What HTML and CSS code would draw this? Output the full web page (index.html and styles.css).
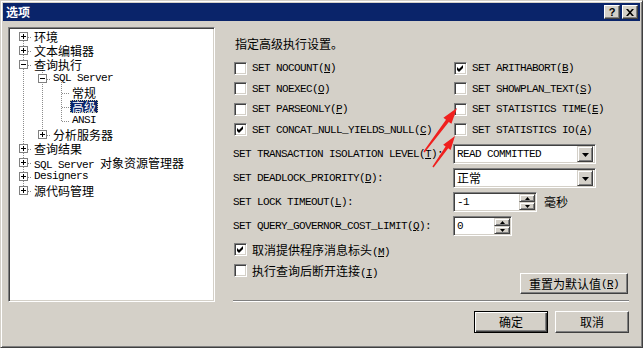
FILE: index.html
```html
<!DOCTYPE html>
<html>
<head>
<meta charset="utf-8">
<title>选项</title>
<link rel="stylesheet" href="styles.css">
</head>
<body>
<div class="window">
  <div class="titlebar">
    <span class="title">选项</span>
    <div class="capbtns">
      <span class="capbtn help">?</span>
      <span class="capbtn"><svg width="8" height="7" viewBox="0 0 8 7"><path d="M0 0h2l2 2.2L6 0h2L5 3.5 8 7H6L4 4.8 2 7H0l3-3.5z"/></svg></span>
    </div>
  </div>
  <div class="main">
    <div class="top">
      <div class="tree">
        <svg class="treelines" width="200" height="200" viewBox="0 0 200 200">
          <g stroke="#8c8c8c" stroke-width="1" stroke-dasharray="1 1" fill="none">
            <path d="M13.5 8V163"/>
            <path d="M14 8.5H22M14 22.5H22M14 36.5H22M14 120.5H22M14 134.5H22M14 148.5H22M14 162.5H22"/>
            <path d="M32.5 37V107"/>
            <path d="M33 50.5H41M33 106.5H41"/>
            <path d="M51.5 51V93"/>
            <path d="M52 64.5H60M52 78.5H60M52 92.5H60"/>
          </g>
        </svg>
        <div class="node l0"><span class="exp plus"></span><span class="lbl">环境</span></div>
        <div class="node l0"><span class="exp plus"></span><span class="lbl">文本编辑器</span></div>
        <div class="node l0"><span class="exp"></span><span class="lbl">查询执行</span></div>
        <div class="node l1"><span class="exp"></span><span class="lbl m">SQL Server</span></div>
        <div class="node l2"><span class="lbl">常规</span></div>
        <div class="node l2"><span class="lbl sel">高级</span></div>
        <div class="node l2"><span class="lbl m">ANSI</span></div>
        <div class="node l1"><span class="exp plus"></span><span class="lbl">分析服务器</span></div>
        <div class="node l0"><span class="exp plus"></span><span class="lbl">查询结果</span></div>
        <div class="node l0"><span class="exp plus"></span><span class="lbl"><span class="m">SQL Server </span>对象资源管理器</span></div>
        <div class="node l0"><span class="exp plus"></span><span class="lbl m">Designers</span></div>
        <div class="node l0"><span class="exp plus"></span><span class="lbl">源代码管理</span></div>
      </div>

      <div class="panel">
        <div class="intro">指定高级执行设置。</div>

        <div class="checks">
          <label class="chk"><span class="box"></span><span class="m">SET NOCOUNT(<u>N</u>)</span></label>
          <label class="chk"><span class="box"><svg width="9" height="9" viewBox="0 0 9 9"><polygon points="1,3 3,5 7,1 7,4 3,8 1,6"/></svg></span><span class="m">SET ARITHABORT(<u>B</u>)</span></label>
          <label class="chk"><span class="box"></span><span class="m">SET NOEXEC(<u>O</u>)</span></label>
          <label class="chk"><span class="box"></span><span class="m">SET SHOWPLAN_TEXT(<u>S</u>)</span></label>
          <label class="chk"><span class="box"></span><span class="m">SET PARSEONLY(<u>P</u>)</span></label>
          <label class="chk"><span class="box"></span><span class="m">SET STATISTICS TIME(<u>E</u>)</span></label>
          <label class="chk"><span class="box"><svg width="9" height="9" viewBox="0 0 9 9"><polygon points="1,3 3,5 7,1 7,4 3,8 1,6"/></svg></span><span class="m">SET CONCAT_NULL_YIELDS_NULL(<u>C</u>)</span></label>
          <label class="chk"><span class="box"></span><span class="m">SET STATISTICS IO(<u>A</u>)</span></label>
        </div>

        <div class="fields">
          <span class="flabel m">SET TRANSACTION ISOLATION LEVEL(<u>T</u>):</span>
          <div class="fcell">
            <div class="combo"><span class="val m">READ COMMITTED</span><span class="dd"><svg width="7" height="4" viewBox="0 0 7 4"><path d="M0 0h7L3.5 4z"/></svg></span></div>
          </div>
          <span class="flabel m">SET DEADLOCK_PRIORITY(<u>D</u>):</span>
          <div class="fcell">
            <div class="combo"><span class="val">正常</span><span class="dd"><svg width="7" height="4" viewBox="0 0 7 4"><path d="M0 0h7L3.5 4z"/></svg></span></div>
          </div>
          <span class="flabel m">SET LOCK TIMEOUT(<u>L</u>):</span>
          <div class="fcell">
            <div class="spin w84"><span class="val m">-1</span><span class="spbtns"><span class="sb"><svg width="5" height="3" viewBox="0 0 5 3"><path d="M0 3h5L2.5 0z"/></svg></span><span class="sb"><svg width="5" height="3" viewBox="0 0 5 3"><path d="M0 0h5L2.5 3z"/></svg></span></span></div>
            <span class="unit">毫秒</span>
          </div>
          <span class="flabel m">SET QUERY_GOVERNOR_COST_LIMIT(<u>Q</u>):</span>
          <div class="fcell">
            <div class="spin w59"><span class="val m">0</span><span class="spbtns"><span class="sb"><svg width="5" height="3" viewBox="0 0 5 3"><path d="M0 3h5L2.5 0z"/></svg></span><span class="sb"><svg width="5" height="3" viewBox="0 0 5 3"><path d="M0 0h5L2.5 3z"/></svg></span></span></div>
          </div>
        </div>

        <div class="opts">
          <label class="chk optrow"><span class="box"><svg width="9" height="9" viewBox="0 0 9 9"><polygon points="1,3 3,5 7,1 7,4 3,8 1,6"/></svg></span><span>取消提供程序消息标头<span class="m">(<u>M</u>)</span></span></label>
          <div class="optlast">
            <label class="chk optrow"><span class="box"></span><span>执行查询后断开连接<span class="m">(<u>I</u>)</span></span></label>
            <button class="btn reset">重置为默认值<span class="m">(<u>R</u>)</span></button>
          </div>
        </div>

        <div class="sep"></div>
      </div>
    </div>

    <div class="footer">
      <button class="btn default">确定</button>
      <button class="btn">取消</button>
    </div>
  </div>
</div>

<svg class="arrows" width="643" height="348" viewBox="0 0 643 348">
  <polygon fill="#f0201e" points="457,108 451.4,123.8 448.8,121.9 424.6,152.4 423.4,151.6 446,119.7 443.4,117.8"/>
  <polygon fill="#f0201e" points="455,136 450.6,150 448.2,148.3 433.6,167.4 432.4,166.6 445.6,146.5 443.2,144.8"/>
</svg>
</body>
</html>
```

FILE: styles.css
```css
* { box-sizing: border-box; }
html, body { margin: 0; padding: 0; }
body {
  position: relative;
  width: 643px;
  height: 348px;
  overflow: hidden;
  background: #d4d0c8;
  font-family: "Noto Sans CJK SC", sans-serif;
  font-size: 12px;
  color: #000;
}
.m {
  font-family: "Liberation Mono", "Noto Sans CJK SC", monospace;
  font-size: 11px;
  letter-spacing: -0.6px;
}
u { text-decoration: underline; text-underline-offset: 1px; }

.window {
  width: 643px;
  height: 348px;
  background: #d4d0c8;
  border: 1px solid;
  border-color: #d4d0c8 #404040 #404040 #d4d0c8;
  box-shadow: inset 1px 1px #fff, inset -1px -1px #808080;
  padding: 2px;
  display: flex;
  flex-direction: column;
}
.titlebar {
  height: 18px;
  flex: none;
  background: #0a246a;
  color: #fff;
  display: flex;
  align-items: center;
  justify-content: space-between;
  padding: 0 2px 0 3px;
}
.title { font-weight: bold; font-size: 12px; line-height: 14px; }
.capbtns { display: flex; gap: 2px; }
.capbtn {
  width: 16px;
  height: 14px;
  background: #d4d0c8;
  border: 1px solid;
  border-color: #fff #404040 #404040 #fff;
  box-shadow: inset -1px -1px #808080;
  display: flex;
  align-items: center;
  justify-content: center;
  color: #000;
}
.capbtn.help {
  font-family: "Liberation Sans", sans-serif;
  font-weight: bold;
  font-size: 11px;
  line-height: 12px;
}

.main {
  flex: 1;
  padding: 6px 11px 0 5px;
  display: flex;
  flex-direction: column;
}
.top { display: flex; height: 275px; flex: none; }

.tree {
  position: relative;
  width: 207px;
  height: 275px;
  flex: none;
  background: #fff;
  border: 1px solid;
  border-color: #808080 #fff #fff #808080;
  box-shadow: inset 1px 1px #404040, inset -1px -1px #d4d0c8;
  padding: 1px 0 0 1px;
}
.treelines { position: absolute; top: 1px; left: 1px; }
.node {
  position: relative;
  height: 14px;
  display: flex;
  align-items: center;
  white-space: nowrap;
}
.l0 { padding-left: 9px; }
.l1 { padding-left: 28px; }
.l2 { padding-left: 60px; }
.exp {
  position: relative;
  width: 9px;
  height: 9px;
  flex: none;
  margin-right: 4px;
  background: #fff;
  border: 1px solid #808080;
}
.exp::before {
  content: "";
  position: absolute;
  left: 1px;
  top: 3px;
  width: 5px;
  height: 1px;
  background: #000;
}
.exp.plus::after {
  content: "";
  position: absolute;
  left: 3px;
  top: 1px;
  width: 1px;
  height: 5px;
  background: #000;
}
.lbl { padding: 0 2px; line-height: 13px; height: 13px; }
.lbl.sel {
  background: #0a246a;
  color: #fff;
  outline: 1px dotted #d8d0a0;
  outline-offset: -1px;
}

.panel {
  width: 396px;
  margin-left: 18px;
  height: 275px;
  display: flex;
  flex-direction: column;
}
.intro { margin-top: 10px; padding-left: 2px; line-height: 14px; height: 14px; }
.checks {
  margin-top: 7px;
  display: grid;
  grid-template-columns: 220px 1fr;
  grid-auto-rows: 20.5px;
}
.chk {
  display: flex;
  align-items: center;
  gap: 5px;
  padding-left: 1px;
  white-space: nowrap;
}
.box {
  position: relative;
  width: 13px;
  height: 13px;
  flex: none;
  background: #fff;
  border: 1px solid;
  border-color: #808080 #fff #fff #808080;
  box-shadow: inset 1px 1px #404040, inset -1px -1px #d4d0c8;
}
.box svg { position: absolute; left: 1px; top: 1px; }

.fields {
  margin-top: 4px;
  display: grid;
  grid-template-columns: 220px auto;
  grid-auto-rows: 20px;
  row-gap: 4px;
  align-items: center;
}
.flabel { white-space: nowrap; }
.fcell { display: flex; align-items: center; height: 20px; }
.combo, .spin {
  height: 20px;
  background: #fff;
  border: 1px solid;
  border-color: #808080 #fff #fff #808080;
  box-shadow: inset 1px 1px #404040, inset -1px -1px #d4d0c8;
  padding: 1px;
  display: flex;
  align-items: center;
}
.combo { width: 143px; padding: 2px 2px 2px 1px; }
.val { flex: 1; padding-left: 2px; line-height: 14px; white-space: nowrap; }
.dd {
  width: 16px;
  height: 16px;
  flex: none;
  background: #d4d0c8;
  border: 1px solid;
  border-color: #d4d0c8 #404040 #404040 #d4d0c8;
  box-shadow: inset 1px 1px #fff, inset -1px -1px #808080;
  display: flex;
  align-items: center;
  justify-content: center;
}
.dd svg { margin-top: 1px; }
.w84 { width: 84px; }
.w59 { width: 59px; }
.spin { padding: 1px 1px 1px 1px; }
.spbtns {
  width: 16px;
  height: 16px;
  flex: none;
  display: flex;
  flex-direction: column;
}
.sb {
  height: 8px;
  background: #d4d0c8;
  border: 1px solid;
  border-color: #d4d0c8 #404040 #404040 #d4d0c8;
  box-shadow: inset 1px 1px #fff, inset -1px -1px #808080;
  display: flex;
  align-items: center;
  justify-content: center;
}
.unit { margin-left: 7px; line-height: 14px; }

.opts { margin-top: 3px; }
.optrow { height: 21px; }
.optlast {
  display: flex;
  justify-content: space-between;
  align-items: flex-start;
}
.btn {
  font-family: "Noto Sans CJK SC", sans-serif;
  font-size: 12px;
  color: #000;
  background: #d4d0c8;
  border: 1px solid;
  border-color: #fff #404040 #404040 #fff;
  box-shadow: inset -1px -1px #808080;
  padding: 0;
  display: flex;
  align-items: center;
  justify-content: center;
  line-height: 14px;
  white-space: nowrap;
}
.reset { margin-top: 13px; margin-right: 1px; width: 108px; height: 21px; }
.sep {
  margin-top: auto;
  height: 2px;
  flex: none;
  border-top: 1px solid #808080;
  border-bottom: 1px solid #fff;
}

.footer {
  display: flex;
  justify-content: flex-end;
  gap: 7px;
  margin-top: 9px;
}
.footer .btn { width: 74px; height: 22px; }
.footer .btn.default {
  border-color: #000;
  box-shadow: inset 1px 1px #fff, inset -1px -1px #404040, inset -2px -2px #808080;
}

.arrows { position: absolute; top: 0; left: 0; pointer-events: none; }
```
